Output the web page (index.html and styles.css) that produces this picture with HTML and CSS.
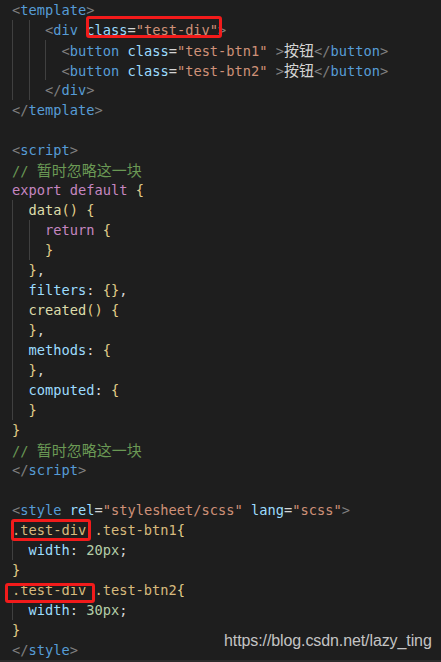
FILE: index.html
```html
<!DOCTYPE html>
<html lang="zh-CN">
<head>
    <meta charset="UTF-8">
    <meta name="viewport" content="width=device-width, initial-scale=1.0">
    <title>test-div</title>
    <link rel="stylesheet" href="styles.css">
</head>
<body>
    <div class="editor">
        <div class="code">
<div class="ln"><span class="p">&lt;</span><span class="tag">template</span><span class="p">&gt;</span></div>
<div class="ln"><span class="ind"></span><span class="ind"></span><span class="p">&lt;</span><span class="tag">div</span> <span class="mark mark-a"><span class="attr">class</span>=<span class="str">"test-div"</span></span><span class="p">&gt;</span></div>
<div class="ln"><span class="ind"></span><span class="ind"></span><span class="ind"></span><span class="p">&lt;</span><span class="tag">button</span> <span class="attr">class</span>=<span class="str">"test-btn1"</span> <span class="p">&gt;</span><span class="cjk">按钮</span><span class="p">&lt;/</span><span class="tag">button</span><span class="p">&gt;</span></div>
<div class="ln"><span class="ind"></span><span class="ind"></span><span class="ind"></span><span class="p">&lt;</span><span class="tag">button</span> <span class="attr">class</span>=<span class="str">"test-btn2"</span> <span class="p">&gt;</span><span class="cjk">按钮</span><span class="p">&lt;/</span><span class="tag">button</span><span class="p">&gt;</span></div>
<div class="ln"><span class="ind"></span><span class="ind"></span><span class="p">&lt;/</span><span class="tag">div</span><span class="p">&gt;</span></div>
<div class="ln"><span class="p">&lt;/</span><span class="tag">template</span><span class="p">&gt;</span></div>
<div class="ln"></div>
<div class="ln"><span class="p">&lt;</span><span class="tag">script</span><span class="p">&gt;</span></div>
<div class="ln"><span class="cm">// <span class="cjk">暂时忽略这一块</span></span></div>
<div class="ln"><span class="kw">export</span> <span class="kw">default</span> <span class="br">{</span></div>
<div class="ln"><span class="ind"></span><span class="fn">data</span><span class="br">()</span> <span class="br">{</span></div>
<div class="ln"><span class="ind"></span><span class="ind"></span><span class="kw">return</span> <span class="br">{</span></div>
<div class="ln"><span class="ind"></span><span class="ind"></span><span class="br">}</span></div>
<div class="ln"><span class="ind"></span><span class="br">}</span>,</div>
<div class="ln"><span class="ind"></span><span class="prop">filters</span>: <span class="br">{}</span>,</div>
<div class="ln"><span class="ind"></span><span class="fn">created</span><span class="br">()</span> <span class="br">{</span></div>
<div class="ln"><span class="ind"></span><span class="br">}</span>,</div>
<div class="ln"><span class="ind"></span><span class="prop">methods</span>: <span class="br">{</span></div>
<div class="ln"><span class="ind"></span><span class="br">}</span>,</div>
<div class="ln"><span class="ind"></span><span class="prop">computed</span>: <span class="br">{</span></div>
<div class="ln"><span class="ind"></span><span class="br">}</span></div>
<div class="ln"><span class="br">}</span></div>
<div class="ln"><span class="cm">// <span class="cjk">暂时忽略这一块</span></span></div>
<div class="ln"><span class="p">&lt;/</span><span class="tag">script</span><span class="p">&gt;</span></div>
<div class="ln"></div>
<div class="ln"><span class="p">&lt;</span><span class="tag">style</span> <span class="attr">rel</span>=<span class="str">"stylesheet/scss"</span> <span class="attr">lang</span>=<span class="str">"scss"</span><span class="p">&gt;</span></div>
<div class="ln"><span class="mark mark-b"><span class="sel">.test-div</span></span> <span class="sel">.test-btn1</span><span class="br">{</span></div>
<div class="ln"><span class="ind"></span><span class="prop">width</span>: <span class="num">20px</span>;</div>
<div class="ln"><span class="br">}</span></div>
<div class="ln"><span class="mark mark-c"><span class="sel">.test-div</span></span> <span class="sel">.test-btn2</span><span class="br">{</span></div>
<div class="ln"><span class="ind"></span><span class="prop">width</span>: <span class="num">30px</span>;</div>
<div class="ln"><span class="br">}</span></div>
<div class="ln"><span class="p">&lt;/</span><span class="tag">style</span><span class="p">&gt;</span></div>
        </div>
        <div class="watermark">https://blog.csdn.net/lazy_ting</div>
    </div>
    <div class="scrollbar"></div>
</body>
</html>
```

FILE: styles.css
```css
body {
    margin: 0;
    padding: 0;
    background-color: #1e1e1e;
    overflow: hidden;
}
.editor {
    position: relative;
    height: 660px;
}
.code {
    padding-left: 12px;
    font-family: "DejaVu Sans Mono", "Liberation Mono", "Noto Sans CJK SC", monospace;
    font-size: 13.7px;
    color: #d4d4d4;
}
.ln {
    height: 20px;
    line-height: 20px;
    white-space: pre;
}
.ind {
    display: inline-block;
    width: 16.5px;
    height: 20px;
    vertical-align: top;
    box-sizing: border-box;
    border-left: 1px solid #404040;
}
.p { color: #808080; }
.tag { color: #569cd6; }
.attr { color: #9cdcfe; }
.str { color: #ce9178; }
.cm { color: #6a9955; }
.kw { color: #c586c0; }
.fn { color: #dcdcaa; }
.prop { color: #9cdcfe; }
.br { color: #e2cf8a; }
.sel { color: #d7ba7d; }
.num { color: #b5cea8; }
.cjk {
    font-family: "Noto Sans CJK SC", sans-serif;
    font-size: 15px;
}
.mark {
    position: relative;
    display: inline-block;
    height: 20px;
    vertical-align: top;
}
.mark::after {
    content: "";
    position: absolute;
    border: 3px solid #f21b1b;
    border-radius: 3px;
}
.mark-a::after {
    left: 0;
    right: -4px;
    top: -4px;
    bottom: 2px;
}
.mark-b::after {
    left: -1px;
    right: -5px;
    top: -1px;
    bottom: -1px;
}
.mark-c::after {
    left: -7px;
    right: -9px;
    top: 3px;
    bottom: -3px;
}
.watermark {
    position: absolute;
    left: 224px;
    top: 632px;
    font-family: "Liberation Sans", Arial, sans-serif;
    font-size: 16px;
    color: #c4c4c4;
    letter-spacing: -0.1px;
}
.scrollbar {
    height: 2px;
    background-color: #2c2c2c;
}
```
